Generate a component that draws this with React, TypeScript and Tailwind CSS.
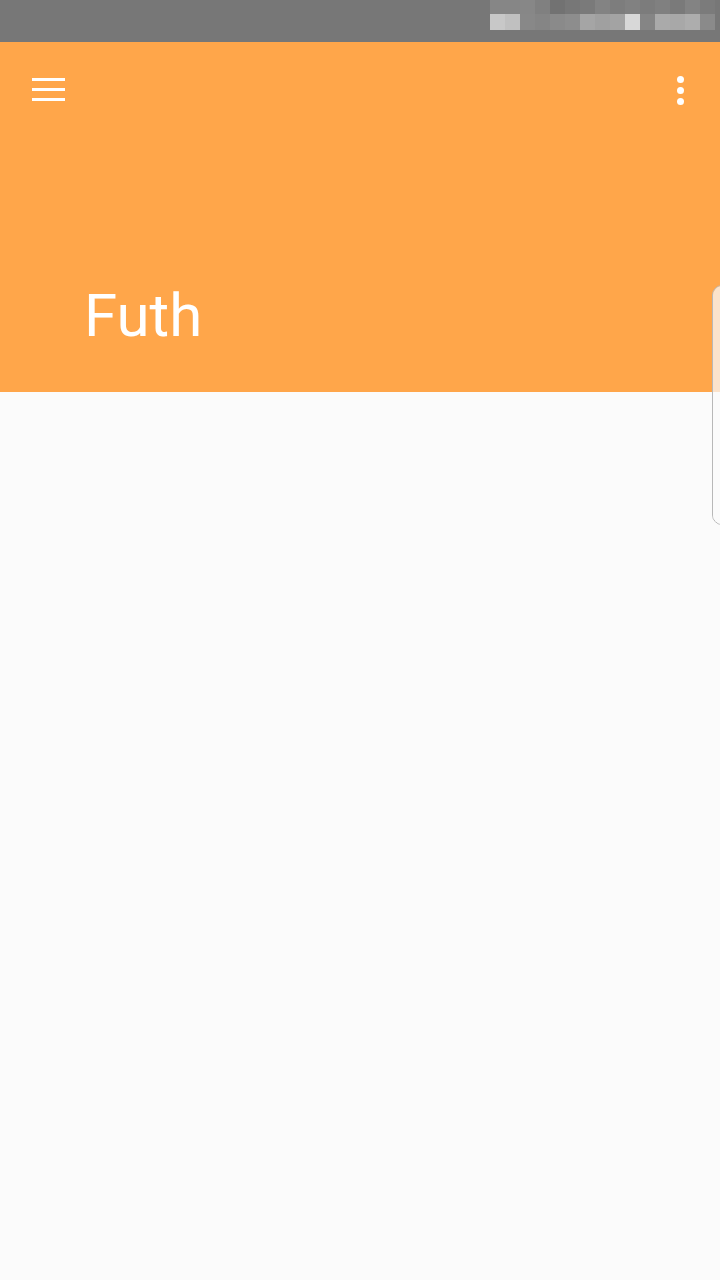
import React from 'react';

const row1 = ['#868686', '#868686', '#878787', '#808080', '#727272', '#777777', '#7a7a7a', '#838383', '#7d7d7d', '#818181', '#7c7c7c', '#808080', '#7a7a7a', '#838383', '#7b7b7b'];
const row2 = ['#c8c8c8', '#c0c0c0', '#888888', '#858585', '#8a8a8a', '#8d8d8d', '#a5a5a5', '#a0a0a0', '#a3a3a3', '#d8d8d8', '#858585', '#aaaaaa', '#a8a8a8', '#adadad', '#8a8a8a'];

export default function App() {
  return (
    <div className="relative w-[720px] h-[1280px] overflow-hidden bg-[#fbfbfb]" style={{ fontFamily: 'Roboto, "Noto Sans", sans-serif' }}>
      {/* Barre d'état */}
      <div className="h-[42px] bg-[#777777] flex justify-end pr-[5px]">
        <div className="flex flex-col">
          <div className="flex">
            {row1.map((c, i) => (
              <div key={i} className="w-[15px] h-[14px]" style={{ backgroundColor: c }} />
            ))}
          </div>
          <div className="flex">
            {row2.map((c, i) => (
              <div key={i} className="w-[15px] h-[16px]" style={{ backgroundColor: c }} />
            ))}
          </div>
        </div>
      </div>

      {/* En-tête orange */}
      <div className="h-[350px] bg-[#ffa64a] flex flex-col">
        <div className="flex items-center justify-between h-[96px] pl-[32px] pr-[36px]">
          <div className="flex flex-col gap-[7px] w-[33px] -mt-[2px]">
            <div className="h-[3px] bg-white" />
            <div className="h-[3px] bg-white" />
            <div className="h-[3px] bg-white" />
          </div>
          <div className="flex flex-col gap-[4px] items-center">
            <div className="w-[7px] h-[7px] rounded-full bg-white" />
            <div className="w-[7px] h-[7px] rounded-full bg-white" />
            <div className="w-[7px] h-[7px] rounded-full bg-white" />
          </div>
        </div>
        <div className="pl-[84px] pt-[148px]">
          <h1 className="text-white text-[60px] leading-none font-normal">Futh</h1>
        </div>
      </div>

      {/* Poignée latérale */}
      <div className="absolute left-[712px] top-[285px] w-[20px] h-[240px] rounded-l-[10px] border border-[#b8b8b8] overflow-hidden flex flex-col">
        <div className="h-[106px] bg-[#fbe3cc]" />
        <div className="flex-1 bg-[#fbfbfb]" />
      </div>
    </div>
  );
}
